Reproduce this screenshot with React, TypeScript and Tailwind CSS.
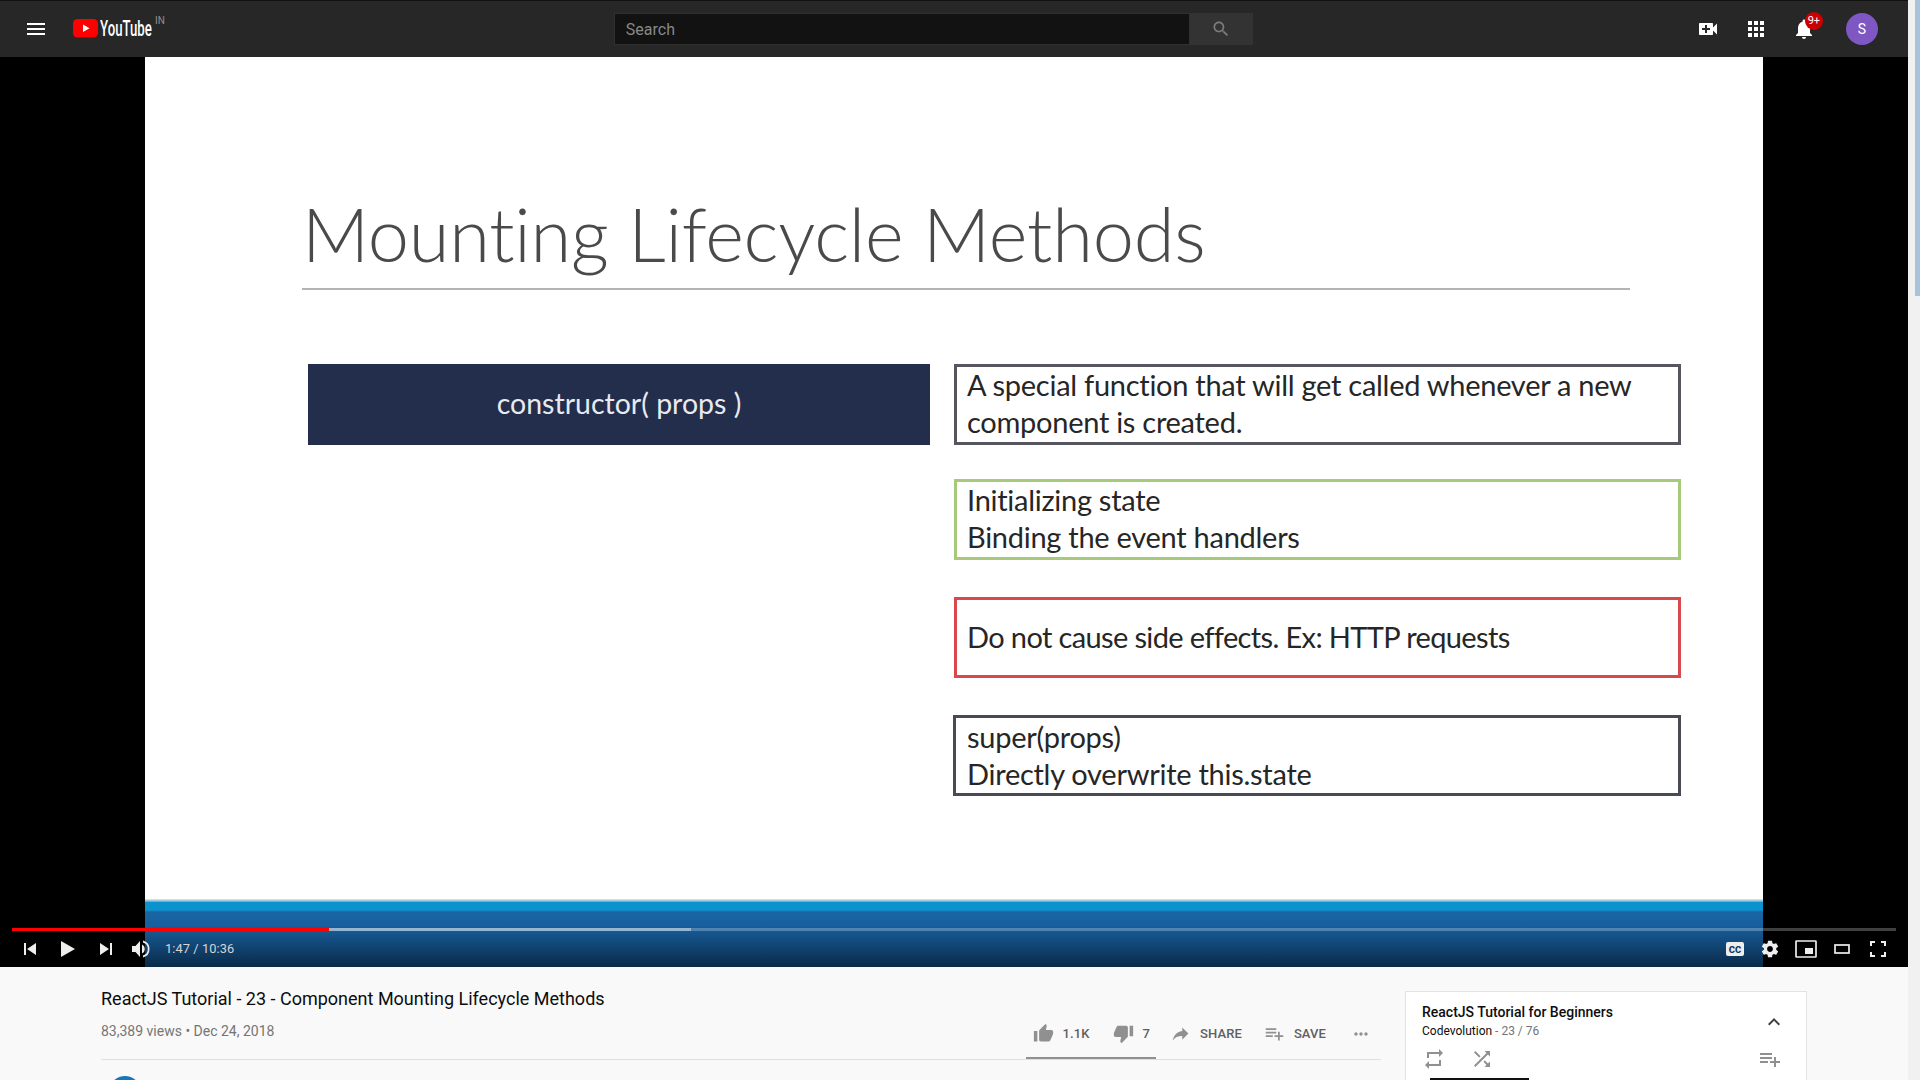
import type { ReactNode } from "react";

const roboto = "font-['Roboto',sans-serif]";
const lato = "font-['Lato','Carlito',sans-serif]";

function Ic({ d, size = 24, cls = "", vb = "0 0 24 24" }: { d: string; size?: number; cls?: string; vb?: string }) {
  return (
    <svg width={size} height={size} viewBox={vb} className={cls} fill="currentColor">
      <path d={d} />
    </svg>
  );
}

const P = {
  menu: "M3 18h18v-2H3v2zm0-5h18v-2H3v2zm0-7v2h18V6H3z",
  cam: "M17 10.5V7c0-.55-.45-1-1-1H4c-.55 0-1 .45-1 1v10c0 .55.45 1 1 1h12c.55 0 1-.45 1-1v-3.5l4 4v-11l-4 4zM14 13h-3v3H9v-3H6v-2h3V8h2v3h3v2z",
  apps: "M4 8h4V4H4v4zm6 12h4v-4h-4v4zm-6 0h4v-4H4v4zm0-6h4v-4H4v4zm6 0h4v-4h-4v4zm6-10v4h4V4h-4zm-6 4h4V4h-4v4zm6 6h4v-4h-4v4zm0 6h4v-4h-4v4z",
  bell: "M12 22c1.1 0 2-.9 2-2h-4c0 1.1.9 2 2 2zm6-6v-5c0-3.07-1.63-5.64-4.5-6.32V4c0-.83-.67-1.5-1.5-1.5s-1.5.67-1.5 1.5v.68C7.64 5.36 6 7.92 6 11v5l-2 2v1h16v-1l-2-2z",
  search: "M15.5 14h-.79l-.28-.27C15.41 12.59 16 11.11 16 9.5 16 5.91 13.09 3 9.5 3S3 5.91 3 9.5 5.91 16 9.5 16c1.61 0 3.09-.59 4.23-1.57l.27.28v.79l5 4.99L20.49 19l-4.99-5zm-6 0C7.01 14 5 11.99 5 9.5S7.01 5 9.5 5 14 7.01 14 9.5 11.99 14 9.5 14z",
  up: "M1 21h4V9H1v12zm22-11c0-1.1-.9-2-2-2h-6.31l.95-4.57.03-.32c0-.41-.17-.79-.44-1.06L14.17 1 7.59 7.59C7.22 7.95 7 8.45 7 9v10c0 1.1.9 2 2 2h9c.83 0 1.54-.5 1.84-1.22l3.02-7.05c.09-.23.14-.47.14-.73v-2z",
  down: "M15 3H6c-.83 0-1.54.5-1.84 1.22l-3.02 7.05c-.09.23-.14.47-.14.73v2c0 1.1.9 2 2 2h6.31l-.95 4.57-.03.32c0 .41.17.79.44 1.06L9.83 23l6.59-6.59c.36-.36.58-.86.58-1.41V5c0-1.1-.9-2-2-2zm4 0v12h4V3h-4z",
  share: "M14 9V5l7 7-7 7v-4.1c-5 0-8.5 1.6-11 5.1 1-5 4-10 11-11z",
  add: "M14 10H2v2h12v-2zm0-4H2v2h12V6zm4 8v-4h-2v4h-4v2h4v4h2v-4h4v-2h-4zM2 16h8v-2H2v2z",
  chev: "M12 8l-6 6 1.41 1.41L12 10.83l4.59 4.58L18 14z",
  loop: "M7 7h10v3l4-4-4-4v3H5v6h2V7zm10 10H7v-3l-4 4 4 4v-3h12v-6h-2v4z",
  shuffle: "M10.59 9.17L5.41 4 4 5.41l5.17 5.17 1.42-1.41zM14.5 4l2.04 2.04L4 18.59 5.41 20 17.96 7.46 20 9.5V4h-5.5zm.33 9.41l-1.41 1.41 3.13 3.13L14.5 20H20v-5.5l-2.04 2.04-3.13-3.13z",
  dots: "M6 10c-1.1 0-2 .9-2 2s.9 2 2 2 2-.9 2-2-.9-2-2-2zm12 0c-1.1 0-2 .9-2 2s.9 2 2 2 2-.9 2-2-.9-2-2-2zm-6 0c-1.1 0-2 .9-2 2s.9 2 2 2 2-.9 2-2-.9-2-2-2z",
  gear: "M19.43 12.98c.04-.32.07-.64.07-.98s-.03-.66-.07-.98l2.11-1.65c.19-.15.24-.42.12-.64l-2-3.46c-.12-.22-.39-.3-.61-.22l-2.49 1c-.52-.4-1.08-.73-1.69-.98l-.38-2.65C14.46 2.18 14.25 2 14 2h-4c-.25 0-.46.18-.49.42l-.38 2.65c-.61.25-1.17.59-1.69.98l-2.49-1c-.23-.09-.49 0-.61.22l-2 3.46c-.13.22-.07.49.12.64l2.11 1.65c-.04.32-.07.65-.07.98s.03.66.07.98l-2.11 1.65c-.19.15-.24.42-.12.64l2 3.46c.12.22.39.3.61.22l2.49-1c.52.4 1.08.73 1.69.98l.38 2.65c.03.24.24.42.49.42h4c.25 0 .46-.18.49-.42l.38-2.65c.61-.25 1.17-.59 1.69-.98l2.49 1c.23.09.49 0 .61-.22l2-3.46c.12-.22.07-.49-.12-.64l-2.11-1.65zM12 15.5c-1.93 0-3.5-1.57-3.5-3.5s1.57-3.5 3.5-3.5 3.5 1.57 3.5 3.5-1.57 3.5-3.5 3.5z",
};

function YouTubeLogo() {
  return (
    <div className="flex items-start ml-[13px] h-[22px]">
      <svg width="26" height="19" viewBox="0 0 26 19" className="mt-[1px]">
        <rect width="25" height="18.500" rx="4.500" fill="#ff0000" />
        <path d="M10 5.500v7.500l6.500-3.750z" fill="#fff" />
      </svg>
      <span className="font-['Roboto',sans-serif] text-white text-[22px] leading-[22px] font-medium ml-[1px] [transform:scaleX(0.6)] origin-left w-[55px] whitespace-nowrap">
        YouTube
      </span>
      <span className="font-['Roboto',sans-serif] text-[#909090] text-[10px] leading-[10px] -mt-[2px]">IN</span>
    </div>
  );
}

function Header() {
  return (
    <header className={`${roboto} h-[57px] bg-[#272727] border-t-[1px] border-[#111] flex items-center shrink-0`}>
      <div className="w-[60px] pl-[24px] flex items-center text-white">
        <Ic d={P.menu} size={24} />
      </div>
      <YouTubeLogo />
      <div className="ml-[449px] flex h-[32px]">
        <div className="w-[576px] bg-[#121212] border border-[#303030] flex items-center pl-[11px] pt-[1px] text-[#888] text-[16px]">Search</div>
        <div className="w-[63px] bg-[#333] flex items-center justify-center text-[#7c7c7c]">
          <Ic d={P.search} size={20} />
        </div>
      </div>
      <div className="flex items-center text-white ml-[443px]">
        <Ic d={P.cam} size={24} />
        <Ic d={P.apps} size={24} cls="ml-[24px]" />
        <div className="relative ml-[24px]">
          <Ic d={P.bell} size={24} />
          <span className="absolute -top-[5px] left-[13px] w-[18px] h-[18px] rounded-full bg-[#cc0000] text-white text-[11px] leading-[18px] text-center">9+</span>
        </div>
        <div className="ml-[30px] w-[32px] h-[32px] rounded-full bg-[#7e57c2] text-white text-[14px] flex items-center justify-center">S</div>
      </div>
    </header>
  );
}

function Box({ cls, children }: { cls: string; children: ReactNode }) {
  return (
    <div className={`${cls} border-[3px] h-[81px] text-[29px] leading-[37px] tracking-[-0.27px] text-[#262626] flex flex-col justify-center whitespace-nowrap`}>
      {children}
    </div>
  );
}

function Slide() {
  return (
    <div className={`${lato} w-[1618px] h-[910px] bg-white relative`}>
      <div className="pl-[157px] pt-[127px]">
        <h1 className="text-[74px] leading-[100px] font-light text-[#4a4a4a] whitespace-nowrap tracking-[-0.25px]">Mounting Lifecycle Methods</h1>
      </div>
      <div className="ml-[157px] mt-[4px] w-[1328px] h-[2px] bg-[#b4b4b4]" />
      <div className="flex ml-[163px] mt-[74px] gap-[24px]">
        <div className="w-[622px] h-[81px] pb-[2px] bg-[#232d4c] text-[#e8eaf0] text-[28.500px] flex items-center justify-center">constructor( props )</div>
        <div className="flex flex-col w-[727px]">
          <Box cls="border-[#55565f] pl-[10px] pb-[4px]">
            <div>A special function that will get called whenever a new</div>
            <div>component is created.</div>
          </Box>
          <Box cls="border-[#a6c97c] pl-[10px] mt-[34px] pb-[4px]">
            <div>Initializing state</div>
            <div>Binding the event handlers</div>
          </Box>
          <Box cls="border-[#d9484c] pl-[10px] mt-[37px] pb-[2px]">
            <div className="tracking-[-0.63px]">Do not cause side effects. Ex: HTTP requests</div>
          </Box>
          <Box cls="border-[#484a55] pl-[11px] mt-[37px] -ml-[1px] pb-[2px]">
            <div>super(props)</div>
            <div>Directly overwrite this.state</div>
          </Box>
        </div>
      </div>
      <div className="absolute left-0 right-0 bottom-0 h-[65px] bg-[linear-gradient(#0a93cf_0,#0a93cf_8px,#1a65a5_10px,#175f9d_24px,#0a2a48_100%)]" />
      <div className="absolute left-0 right-0 bottom-[65px] h-[3px] bg-[linear-gradient(#e8eeee,#5aa5c0)]" />
    </div>
  );
}

function Controls() {
  return (
    <div className={`${roboto} absolute left-0 right-0 bottom-0 h-[39px]`}>
      <div className="absolute left-[12px] right-[12px] top-0 h-[3px] bg-white/25">
        <div className="absolute left-0 top-0 h-full w-[679px] bg-white/40" />
        <div className="absolute left-0 top-0 h-full w-[317px] bg-[#ff0000]" />
      </div>
      <div className="absolute inset-x-0 top-[3px] bottom-0 flex items-center text-[#eeeeee]">
        <svg width="14" height="14" viewBox="0 0 14 14" className="ml-[23px]" fill="currentColor"><path d="M1 1h2v12H1zM13 1v12L4 7z" /></svg>
        <svg width="16" height="18" viewBox="0 0 16 18" className="ml-[23px]" fill="currentColor"><path d="M1 1v16l14-8z" /></svg>
        <svg width="14" height="14" viewBox="0 0 14 14" className="ml-[23px]" fill="currentColor"><path d="M11 1h2v12h-2zM1 1v12l9-6z" /></svg>
        <svg width="20" height="20" viewBox="0 0 20 20" className="ml-[18px]" fill="currentColor">
          <path d="M1 7v6h3.500L9 18V2L4.500 7z" />
          <path d="M11 5.500a5 5 0 0 1 0 9z" />
          <path d="M12 1.500v2a6.800 6.800 0 0 1 0 13v2a8.800 8.800 0 0 0 0-17z" />
        </svg>
        <span className="ml-[14px] text-[12.8px] text-[#d5d5d5] tracking-[0.1px]">1:47 / 10:36</span>
        <div className="ml-auto flex items-center mr-[22px]">
          <svg width="18" height="14" viewBox="0 0 18 14"><rect width="18" height="14" rx="2" fill="#eee" /><text x="9" y="10.500" textAnchor="middle" fontSize="9.500" fontWeight="900" fill="#0e3a5f" fontFamily="Roboto">CC</text></svg>
          <Ic d={P.gear} size={20} cls="ml-[16px]" />
          <svg width="22" height="18" viewBox="0 0 22 18" className="ml-[15px]"><rect x="1" y="1" width="20" height="16" fill="none" stroke="#eee" strokeWidth="1.700" rx="0.500" /><rect x="10" y="8" width="8" height="6" fill="#eee" /></svg>
          <svg width="16" height="10" viewBox="0 0 16 10" className="ml-[17px]"><rect x="1" y="1" width="14" height="8" fill="none" stroke="#eee" strokeWidth="1.700" /></svg>
          <svg width="16" height="16" viewBox="0 0 16 16" className="ml-[20px]" fill="none" stroke="#eee" strokeWidth="2"><path d="M1 5V1h4M11 1h4v4M15 11v4h-4M5 15H1v-4" /></svg>
        </div>
      </div>
    </div>
  );
}

function Action({ icon, label, ml = "" }: { icon: string; label: string; ml?: string }) {
  return (
    <div className={`flex items-center ${ml}`}>
      <Ic d={icon} size={21} cls="text-[#909090]" />
      <span className="ml-[9px] text-[13px] font-medium text-[#606060] tracking-[0.1px]">{label}</span>
    </div>
  );
}

function Info() {
  return (
    <div className={`${roboto} flex-1 bg-[#f9f9f9] flex overflow-hidden`}>
      <div className="ml-[101px] w-[1280px] shrink-0">
        <div className="pt-[20px] text-[18px] leading-[24px] text-[#0d0d0d]">ReactJS Tutorial - 23 - Component Mounting Lifecycle Methods</div>
        <div className="flex h-[48px] relative">
          <div className="pt-[10px] text-[14px] leading-[20px] text-[#757575]">83,389 views • Dec 24, 2018</div>
          <div className="ml-auto flex items-center h-[44px] pt-[1px] pr-[10px]">
            <Action icon={P.up} label="1.1K" />
            <Action icon={P.down} label="7" ml="ml-[23px]" />
            <Action icon={P.share} label="SHARE" ml="ml-[20px]" />
            <Action icon={P.add} label="SAVE" ml="ml-[22px]" />
            <Ic d={P.dots} size={20} cls="text-[#909090] ml-[25px]" />
          </div>
        </div>
        <div className="h-[1px] bg-[#e0e0e0] relative">
          <div className="absolute left-[925px] -top-[2px] h-[2px] w-[130px] bg-[#909090]" />
        </div>
        <div className="mt-[16px] ml-[8px] w-[32px] h-[32px] rounded-full bg-[#1976b8]" />
      </div>
      <div className="ml-[24px] mt-[24px] w-[402px] h-[200px] bg-white border border-[#e3e3e3] shrink-0">
        <div className="pl-[16px] pr-[23px] pt-[10px] flex justify-between">
          <div>
            <div className="text-[14px] leading-[20px] font-medium text-[#0d0d0d]">ReactJS Tutorial for Beginners</div>
            <div className="text-[12px] leading-[19px] text-[#0d0d0d]">Codevolution <span className="text-[#757575]">- 23 / 76</span></div>
          </div>
          <Ic d={P.chev} size={24} cls="text-[#404040] mt-[8px] -mr-[3px]" />
        </div>
        <div className="pl-[16px] pr-[24px] mt-[6px] flex items-center text-[#909090]">
          <Ic d={P.loop} size={24} />
          <Ic d={P.shuffle} size={24} cls="ml-[24px]" />
          <Ic d={P.add} size={24} cls="ml-auto" />
        </div>
        <div className="ml-[24px] mt-[7px] w-[99px] h-[40px] bg-[#111]" />
      </div>
    </div>
  );
}

export default function App() {
  return (
    <div className="h-[1080px] w-[1920px] overflow-hidden flex bg-[#f9f9f9]">
      <div className="w-[1908px] flex flex-col shrink-0">
        <Header />
        <div className="relative h-[910px] bg-black flex justify-center shrink-0">
          <Slide />
          <Controls />
        </div>
        <Info />
      </div>
      <div className="w-[12px] bg-[#f1f1f1] flex justify-end">
        <div className="w-[5px] h-[296px] bg-[#a8c4dc]" />
      </div>
    </div>
  );
}
